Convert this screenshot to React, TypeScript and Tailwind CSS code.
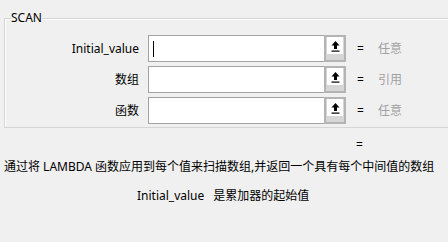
import React from "react";

const FONT = "font-['Noto_Sans','Noto_Sans_CJK_SC',sans-serif]";

const rows = [
  { label: "Initial_value", hint: "任意", focus: true },
  { label: "数组", hint: "引用", focus: false },
  { label: "函数", hint: "任意", focus: false },
];

function PickIcon() {
  return (
    <svg width="9" height="12" viewBox="0 0 9 12" className="block">
      <path d="M4.5 1 L8.5 5.5 L6 5.5 L6 9 L3 9 L3 5.5 L0.5 5.5 Z" fill="#000" />
      <rect x="0.5" y="10.5" width="8" height="1.2" fill="#000" />
    </svg>
  );
}

function RefEdit({ focus }: { focus: boolean }) {
  return (
    <div className="flex h-[27px] w-[198px] border border-[#a3a3a3] bg-white">
      <div className="flex flex-1 items-center pl-1">
        {focus && <div className="h-4 w-px bg-black" />}
      </div>
      <div className="flex w-[22px] justify-center border-2 border-[#b4b4b4] bg-[#d6d6d6] -my-px -mr-px">
        <div className="flex h-[17px] w-[16px] items-center justify-center bg-white">
          <PickIcon />
        </div>
      </div>
    </div>
  );
}

export default function App() {
  return (
    <div
      className={
        "h-[242px] w-[448px] overflow-hidden bg-[#f0f0f0] text-[12px] text-black " +
        FONT
      }
    >
      <div className="pt-[10px] pl-1">
        <fieldset className="w-[470px] border border-[#d5d5d5] pb-[3px] shadow-[inset_1px_1px_0_#fff]">
          <legend className="ml-[6px] leading-[16px]">SCAN</legend>
          <div className="flex flex-col gap-1 pt-[9px]">
            {rows.map((r) => (
              <div key={r.label} className="flex items-center">
                <div className="w-[134px] text-right">{r.label}</div>
                <div className="ml-[9px]">
                  <RefEdit focus={r.focus} />
                </div>
                <div className="ml-[11px] w-[21px]">=</div>
                <div className="text-[#a0a0a0]">{r.hint}</div>
              </div>
            ))}
          </div>
        </fieldset>
      </div>
      <div className="mt-[9px] pl-[356px] leading-[16px]">=</div>
      <div className="mt-[5px] pl-[4px] leading-[18px] whitespace-nowrap">
        通过将 LAMBDA 函数应用到每个值来扫描数组,并返回一个具有每个中间值的数组
      </div>
      <div className="mt-[11px] flex pl-[137px] leading-[18px]">
        <span>Initial_value</span>
        <span className="ml-[9px]">是累加器的起始值</span>
      </div>
    </div>
  );
}
